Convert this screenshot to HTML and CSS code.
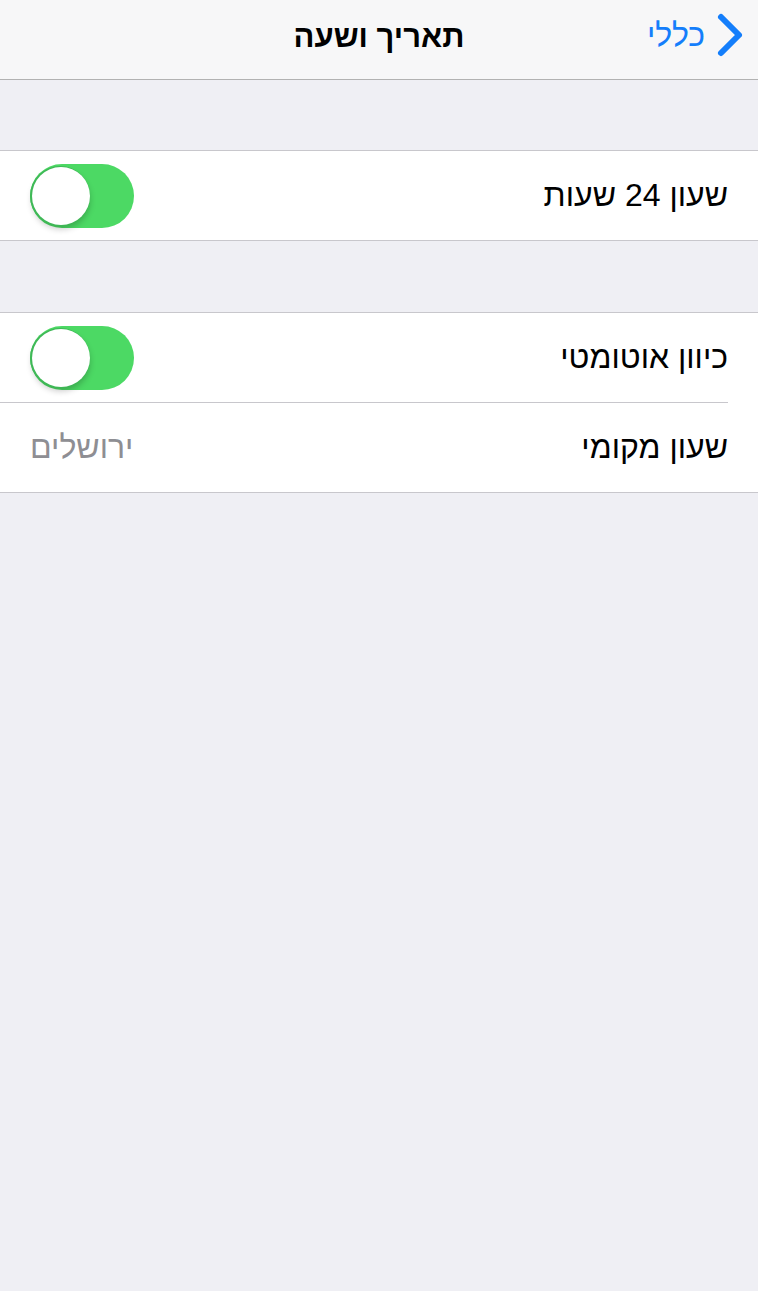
FILE: index.html
```html
<!DOCTYPE html>
<html lang="he" dir="rtl">

<head>
    <meta charset="UTF-8">
    <title>תאריך ושעה</title>
    <link rel="stylesheet" href="styles.css">
</head>

<body>
    <header class="navbar">
        <a class="back" href="#">
            <svg class="chevron" width="30" height="46" viewBox="0 0 30 46">
                <path d="M6 5 L24 23 L6 41" fill="none" stroke="#147efb" stroke-width="6" stroke-linecap="round" stroke-linejoin="round" />
            </svg>
            <span>כללי</span>
        </a>
        <h1 class="title">תאריך ושעה</h1>
    </header>

    <section class="group">
        <div class="cell">
            <div class="cell-content">
                <span class="label">שעון 24 שעות</span>
                <span class="switch on"><span class="knob"></span></span>
            </div>
        </div>
    </section>

    <section class="group second">
        <div class="cell">
            <div class="cell-content divided">
                <span class="label">כיוון אוטומטי</span>
                <span class="switch on"><span class="knob"></span></span>
            </div>
        </div>
        <div class="cell">
            <div class="cell-content">
                <span class="label">שעון מקומי</span>
                <span class="detail">ירושלים</span>
            </div>
        </div>
    </section>
</body>

</html>
```

FILE: styles.css
```css
*,
*::after,
*::before {
    box-sizing: border-box;
}

body {
    margin: 0;
    min-height: 1291px;
    background: #efeff4;
    font-family: "Liberation Sans", "DejaVu Sans", sans-serif;
    color: #000;
}

.navbar {
    position: relative;
    height: 80px;
    padding-bottom: 6px;
    background: #f7f7f8;
    border-bottom: 1px solid #b2b2b2;
    display: flex;
    align-items: center;
    justify-content: center;
}

.title {
    margin: 0;
    font-size: 31px;
    font-weight: bold;
}

.back {
    position: absolute;
    right: 13px;
    top: 12px;
    display: flex;
    align-items: center;
    gap: 10px;
    color: #147efb;
    text-decoration: none;
    font-size: 32px;
}

.chevron {
    display: block;
}

.group {
    margin-top: 70px;
    background: #fff;
    border-top: 1px solid #c8c7cc;
    border-bottom: 1px solid #c8c7cc;
}

.group.second {
    margin-top: 71px;
}

.cell {
    padding-right: 30px;
}

.cell-content {
    height: 89px;
    padding-left: 30px;
    display: flex;
    align-items: center;
    justify-content: space-between;
}

.cell-content.divided {
    height: 90px;
    border-bottom: 1px solid #c8c7cc;
}

.label {
    font-size: 32px;
}

.detail {
    font-size: 32px;
    color: #8e8e93;
}

.switch {
    position: relative;
    width: 104px;
    height: 64px;
    border-radius: 32px;
    background: #4cd964;
}

.switch .knob {
    position: absolute;
    top: 3px;
    left: 2px;
    width: 58px;
    height: 58px;
    border-radius: 50%;
    background: #fff;
    box-shadow: -1px 0 0 1px #3fb857, 0 4px 6px rgba(0, 0, 0, 0.22);
}
```
